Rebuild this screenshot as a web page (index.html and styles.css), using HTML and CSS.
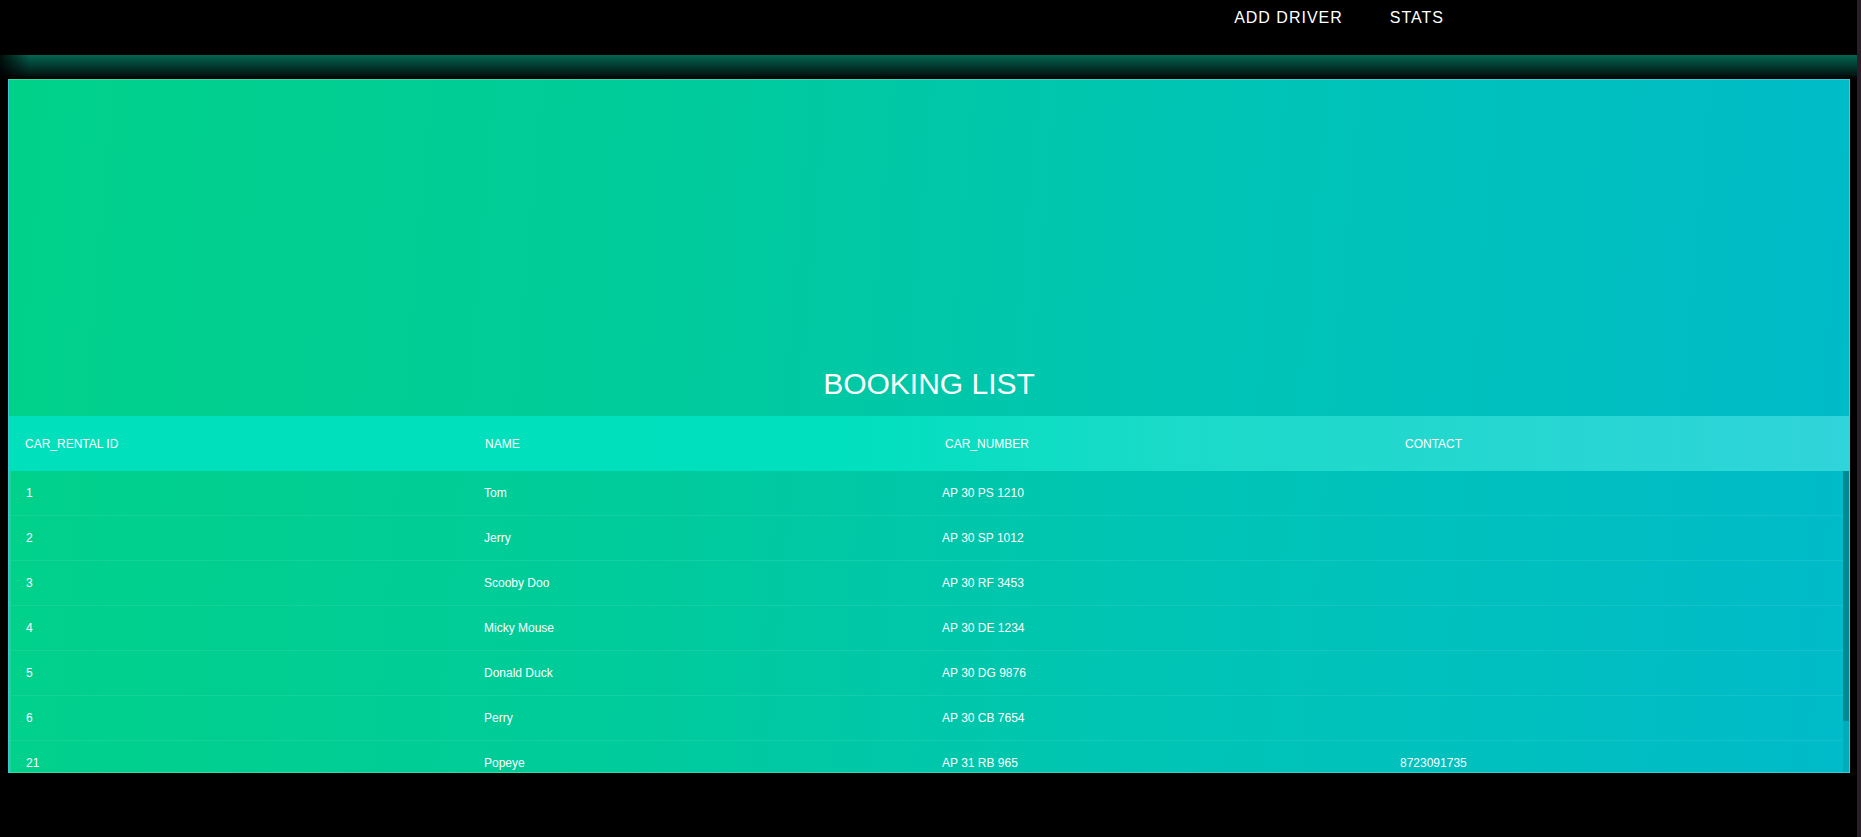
FILE: index.html
```html
<!DOCTYPE html>
<html lang="en">
<head>
<meta charset="utf-8">
<title>Booking List</title>
<link rel="stylesheet" href="styles.css">
</head>
<body>
<div class="page">
  <div class="main">
    <nav class="topnav">
      <a href="#" class="nav-link">ADD DRIVER</a>
      <a href="#" class="nav-link">STATS</a>
    </nav>
    <div class="glow-band"></div>
    <section class="panel">
      <h1 class="title">Booking List</h1>
      <div class="tbl-header">
        <table>
          <thead>
            <tr>
              <th>CAR_RENTAL ID</th>
              <th>NAME</th>
              <th>CAR_NUMBER</th>
              <th>CONTACT</th>
            </tr>
          </thead>
        </table>
      </div>
      <div class="tbl-body">
        <div class="tbl-content">
          <table>
            <tbody>
              <tr><td>1</td><td>Tom</td><td>AP 30 PS 1210</td><td></td></tr>
              <tr><td>2</td><td>Jerry</td><td>AP 30 SP 1012</td><td></td></tr>
              <tr><td>3</td><td>Scooby Doo</td><td>AP 30 RF 3453</td><td></td></tr>
              <tr><td>4</td><td>Micky Mouse</td><td>AP 30 DE 1234</td><td></td></tr>
              <tr><td>5</td><td>Donald Duck</td><td>AP 30 DG 9876</td><td></td></tr>
              <tr><td>6</td><td>Perry</td><td>AP 30 CB 7654</td><td></td></tr>
              <tr><td>21</td><td>Popeye</td><td>AP 31 RB 965</td><td>8723091735</td></tr>
            </tbody>
          </table>
        </div>
        <div class="scroll-track"><div class="scroll-thumb"></div></div>
      </div>
    </section>
  </div>
  <div class="edge"></div>
</div>
</body>
</html>
```
FILE: styles.css
```css
html, body {
  margin: 0;
  padding: 0;
  background: #000;
  height: 100%;
}

body {
  font-family: "Liberation Sans", Arial, sans-serif;
  color: #fff;
  overflow: hidden;
}

.page {
  display: flex;
  height: 837px;
}

.main {
  flex: 1;
  min-width: 0;
}

.edge {
  width: 4px;
  background: #2a1e2a;
}

.topnav {
  height: 55px;
  box-sizing: border-box;
  display: flex;
  justify-content: flex-end;
  align-items: flex-start;
  gap: 47px;
  padding: 8px 413px 0 0;
}

.nav-link {
  color: #fff;
  text-decoration: none;
  font-size: 16px;
  line-height: 20px;
  letter-spacing: 1px;
}

.glow-band {
  height: 24px;
  background:
    linear-gradient(to right, rgba(0,0,0,0.85) 0, rgba(0,0,0,0) 30px),
    linear-gradient(to bottom, #05654f 0%, #034035 40%, #021a16 80%, #000 100%);
}

.panel {
  margin: 0 7px 0 8px;
  height: 694px;
  box-sizing: border-box;
  border: 1px solid rgba(255, 255, 255, 0.22);
  background: linear-gradient(95deg, #00d189 0%, #00cb9b 35%, #00c4b6 65%, #00bbc9 100%);
  padding-top: 287px;
  display: flex;
  flex-direction: column;
}

.title {
  margin: 0 0 15px;
  font-size: 30px;
  line-height: 34px;
  font-weight: normal;
  text-transform: uppercase;
  text-align: center;
  color: #fff;
}

table {
  width: 100%;
  table-layout: fixed;
  border-collapse: collapse;
}

.tbl-header {
  background: linear-gradient(to right, #00e0bd 0%, #00e0be 45%, #1cdac9 65%, #30d4da 100%);
}

th {
  height: 55px;
  box-sizing: border-box;
  padding: 0 16px;
  text-align: left;
  font-weight: normal;
  font-size: 12px;
  color: #fff;
  text-transform: uppercase;
}

.tbl-body {
  flex: 1;
  min-height: 0;
  display: flex;
  border-left: 2px solid rgba(255, 255, 255, 0.1);
}

.tbl-content {
  flex: 1;
  min-width: 0;
  overflow: hidden;
}

.scroll-track {
  width: 6px;
  background: rgba(0, 0, 0, 0.08);
}

.scroll-thumb {
  height: 250px;
  background: rgba(0, 0, 0, 0.2);
}

td {
  padding: 15px;
  text-align: left;
  vertical-align: middle;
  font-size: 12px;
  line-height: 14px;
  color: #fff;
  border-bottom: 1px solid rgba(255, 255, 255, 0.08);
}
```
